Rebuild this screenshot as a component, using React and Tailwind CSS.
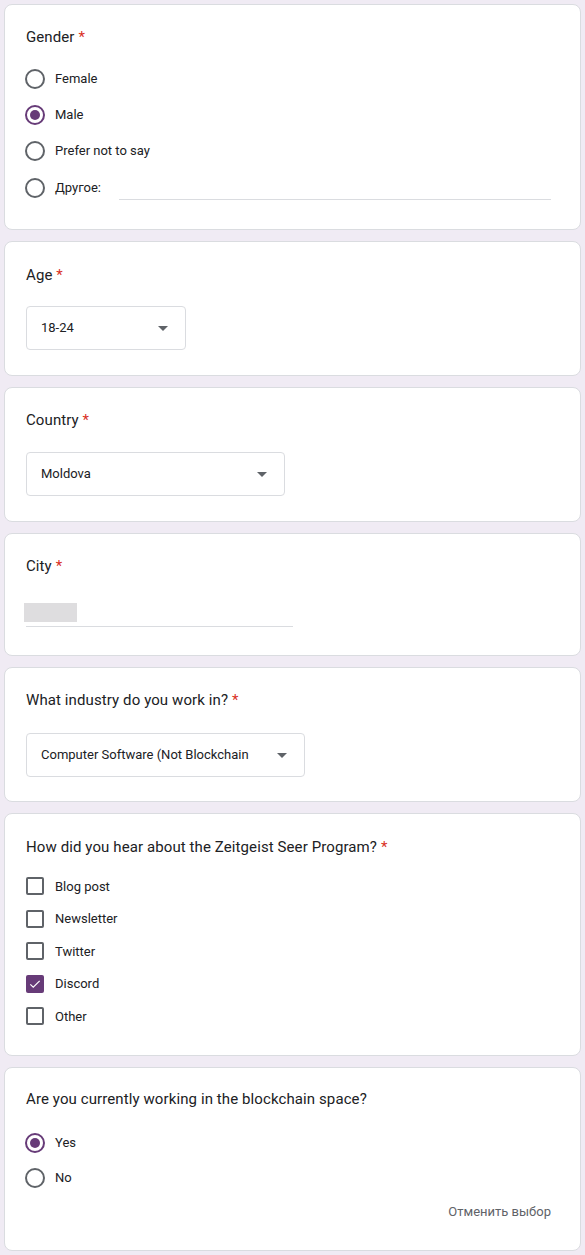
import React from "react";

function Title({ children, required = true }) {
  return (
    <div className="text-[15px] leading-[20px] text-[#202124] tracking-[0.1px]">
      {children}
      {required && <span className="text-[#d93025]"> *</span>}
    </div>
  );
}

function Radio({ checked, label, h = "h-[36px]", children }) {
  return (
    <div className={`flex items-center ${h}`}>
      <div
        className={`w-[20px] h-[20px] -ml-[1px] rounded-full border-2 flex items-center justify-center shrink-0 ${
          checked ? "border-[#673b78]" : "border-[#5f6368]"
        }`}
      >
        {checked && <div className="w-[10px] h-[10px] rounded-full bg-[#673b78]" />}
      </div>
      <span className="ml-[10px] text-[13px] text-[#202124]">{label}</span>
      {children}
    </div>
  );
}

function Checkbox({ checked, label }) {
  return (
    <div className="flex items-center h-[32.5px]">
      {checked ? (
        <div className="w-[18px] h-[18px] rounded-[2px] bg-[#673b78] flex items-center justify-center shrink-0">
          <svg width="14" height="14" viewBox="0 0 24 24" fill="none">
            <path d="M4 12.5l5 5L20 6.5" stroke="#fff" strokeWidth="2" />
          </svg>
        </div>
      ) : (
        <div className="w-[18px] h-[18px] rounded-[2px] border-2 border-[#5f6368] shrink-0" />
      )}
      <span className="ml-[11px] text-[13px] text-[#202124]">{label}</span>
    </div>
  );
}

function Dropdown({ value, w }) {
  return (
    <div className={`flex items-center h-[44px] ${w} border border-[#dadce0] rounded-[4px] pl-[14px] pr-[17px]`}>
      <span className="text-[13px] text-[#202124] flex-1 whitespace-nowrap overflow-hidden">{value}</span>
      <svg width="10" height="5" viewBox="0 0 10 5" className="shrink-0 ml-[8px]">
        <path d="M0 0h10L5 5z" fill="#5f6368" />
      </svg>
    </div>
  );
}

function Card({ className = "", children }) {
  return (
    <div className={`bg-white border border-[#dadce0] rounded-[8px] pl-[21px] pr-[29px] ${className}`}>
      {children}
    </div>
  );
}

export default function App() {
  return (
    <div
      className="min-h-[1255px] bg-[#f0ebf4] px-[4px] pt-[4px] pb-[3px] flex flex-col gap-[11px] w-[585px]"
      style={{ fontFamily: "Roboto, 'Liberation Sans', sans-serif" }}
    >
      <Card className="pt-[22px] pb-[23px]">
        <Title>Gender</Title>
        <div className="mt-[14px]">
          <Radio label="Female" />
          <Radio checked label="Male" />
          <Radio label="Prefer not to say" />
          <Radio label="Другое:" h="h-[37px]">
            <div className="flex-1 self-end mb-[6px] ml-[18px] border-b border-[#dadce0]" />
          </Radio>
        </div>
      </Card>

      <Card className="pt-[23px] pb-[25px]">
        <Title>Age</Title>
        <div className="mt-[21px]">
          <Dropdown value="18-24" w="w-[160px]" />
        </div>
      </Card>

      <Card className="pt-[22px] pb-[25px]">
        <Title>Country</Title>
        <div className="mt-[22px]">
          <Dropdown value="Moldova" w="w-[259px]" />
        </div>
      </Card>

      <Card className="pt-[22px] pb-[28px]">
        <Title>City</Title>
        <div className="mt-[21px] w-[267px] h-[30px] border-b border-[#dadce0] flex items-end pb-[4px]">
          <div className="w-[53px] h-[19px] bg-[#dedddf] -ml-[2px]" />
        </div>
      </Card>

      <Card className="pt-[22px] pb-[24px]">
        <Title>What industry do you work in?</Title>
        <div className="mt-[23px]">
          <Dropdown value="Computer Software (Not Blockchain" w="w-[279px]" />
        </div>
      </Card>

      <Card className="pt-[23px] pb-[22px]">
        <Title>How did you hear about the Zeitgeist Seer Program?</Title>
        <div className="mt-[13px]">
          <Checkbox label="Blog post" />
          <Checkbox label="Newsletter" />
          <Checkbox label="Twitter" />
          <Checkbox checked label="Discord" />
          <Checkbox label="Other" />
        </div>
      </Card>

      <Card className="pt-[21px] pb-[22px]">
        <Title required={false}>Are you currently working in the blockchain space?</Title>
        <div className="mt-[17px]">
          <Radio checked label="Yes" h="h-[35px]" />
          <Radio label="No" h="h-[35px]" />
        </div>
        <div className="flex justify-end">
          <span className="text-[13px] leading-[32px] text-[#5f6368]">Отменить выбор</span>
        </div>
      </Card>
    </div>
  );
}
